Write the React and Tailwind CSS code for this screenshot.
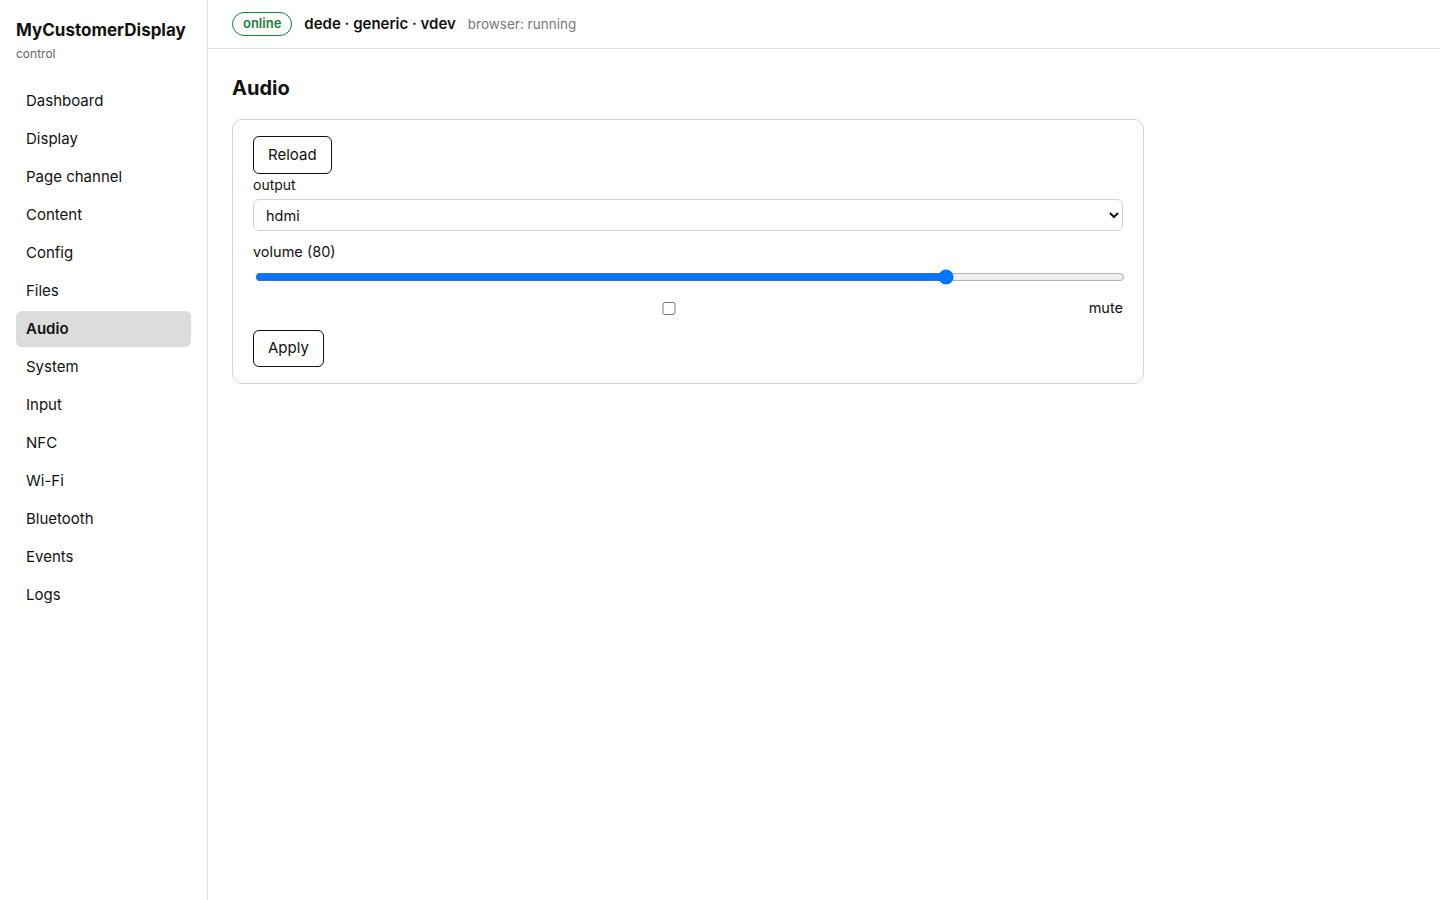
import { useState } from "react";

const nav = [
  "Dashboard",
  "Display",
  "Page channel",
  "Content",
  "Config",
  "Files",
  "Audio",
  "System",
  "Input",
  "NFC",
  "Wi-Fi",
  "Bluetooth",
  "Events",
  "Logs",
];

export default function App() {
  const [volume, setVolume] = useState(80);
  const [output, setOutput] = useState("hdmi");
  const [mute, setMute] = useState(false);

  return (
    <div className="flex min-h-screen bg-white text-[#111] font-['Inter',sans-serif]">
      <aside className="w-[208px] shrink-0 border-r border-[#dcdcdc] px-4 pt-[18px]">
        <div className="text-[17px] font-bold leading-6">MyCustomerDisplay</div>
        <div className="text-xs text-[#666] mt-1">control</div>
        <nav className="mt-[21px] flex flex-col gap-0.5">
          {nav.map((item) => (
            <a
              key={item}
              href="#"
              className={
                "h-9 flex items-center px-2.5 rounded-md text-[15px] " +
                (item === "Audio" ? "bg-[#dcdcdc] font-semibold" : "")
              }
            >
              {item}
            </a>
          ))}
        </nav>
      </aside>

      <main className="flex-1 min-w-0">
        <header className="h-[49px] border-b border-[#dcdcdc] px-6 flex items-center gap-3">
          <span className="border border-[#1a7f37] text-[#1a7f37] rounded-full px-2.5 h-6 flex items-center text-[13px] font-semibold">
            online
          </span>
          <span className="text-[15px] font-semibold">dede · generic · vdev</span>
          <span className="text-[13.5px] text-[#777]">browser: running</span>
        </header>

        <div className="px-6 pt-[25px]">
          <h1 className="text-xl font-bold leading-7 mb-[17px]">Audio</h1>
          <section className="max-w-[912px] border border-[#d4d4d4] rounded-[10px] px-5 py-4">
            <button className="h-[38px] px-[14px] border border-[#111] rounded-md text-[15px]">
              Reload
            </button>
            <label className="block text-[14px] leading-[22px]">output</label>
            <select
              value={output}
              onChange={(e) => setOutput(e.target.value)}
              className="mt-[3px] w-full h-8 px-2 border border-[#d4d4d4] rounded-md text-[14.5px] bg-white"
            >
              <option value="hdmi">hdmi</option>
              <option value="analog">analog</option>
            </select>
            <label className="block mt-[11px] text-[14.5px] leading-5">volume ({volume})</label>
            <input
              type="range"
              min="0"
              max="100"
              value={volume}
              onChange={(e) => setVolume(e.target.value)}
              className="w-full mt-[7px] ml-0.5 block"
            />
            <label className="flex items-center mt-[13px] text-[14.5px] gap-1 leading-5">
              <input
                type="checkbox"
                checked={mute}
                onChange={(e) => setMute(e.target.checked)}
                className="flex-1"
              />
              mute
            </label>
            <button className="mt-3 h-[37px] px-[14px] border border-[#111] rounded-md text-[15px]">
              Apply
            </button>
          </section>
        </div>
      </main>
    </div>
  );
}
